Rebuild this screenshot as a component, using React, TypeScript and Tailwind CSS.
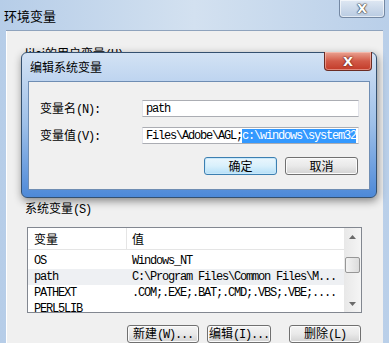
const cjk = "font-['Noto_Sans_CJK_SC',sans-serif]";
const mono = "font-['Liberation_Mono',monospace] text-[12px] tracking-[-1.2px]";

// Win7 style push button
function Btn({
  children,
  w,
  primary,
}: {
  children: React.ReactNode;
  w: string;
  primary?: boolean;
}) {
  return (
    <div
      className={
        w +
        " flex h-[18px] items-center justify-center rounded-[3px] border text-[12px] leading-none text-black " +
        (primary
          ? "border-[#3c7fb1] bg-linear-to-b from-[#eaf6fd] via-[#d9f0fc] to-[#b5dff7] shadow-[inset_0_0_0_1px_#c8e8fa]"
          : "border-[#707070] bg-linear-to-b from-[#f4f4f4] via-[#e9e9e9] to-[#d2d2d2] shadow-[inset_0_0_0_1px_#fbfbfb]")
      }
    >
      {children}
    </div>
  );
}

function Label({ zh, en }: { zh: string; en: string }) {
  return (
    <span className="flex items-baseline whitespace-nowrap text-[12px] text-black">
      <span className={cjk}>{zh}</span>
      <span className={mono}>{en}</span>
    </span>
  );
}

const rows = [
  { name: "OS", value: "Windows_NT" },
  { name: "path", value: "C:\\Program Files\\Common Files\\M...", hl: true },
  { name: "PATHEXT", value: ".COM;.EXE;.BAT;.CMD;.VBS;.VBE;...." },
  { name: "PERL5LIB", value: "" },
];

function Arrow({ up }: { up?: boolean }) {
  return (
    <svg width="7" height="4" viewBox="0 0 7 4">
      <polygon
        points={up ? "0,4 7,4 3.5,0" : "0,0 7,0 3.5,4"}
        fill="#6a6a6a"
      />
    </svg>
  );
}

export default function App() {
  return (
    <div className="relative flex h-[343px] w-[389px] flex-col overflow-hidden bg-linear-to-r from-[#b6cde8] via-[#d3e1f0] to-[#b9cfe9]">
      {/* outer title bar */}
      <div className="flex h-[30px] shrink-0 items-start justify-between pl-[4px] pr-[4px]">
        <span className={cjk + " mt-[6px] text-[13px] text-black"}>环境变量</span>
        <div className="flex h-[18px] w-[46px] items-center justify-center rounded-b-[4px] border border-t-0 border-[#7488a3] bg-linear-to-b from-[#dfe8f3] to-[#b9cbe2] shadow-[inset_0_0_0_1px_rgba(255,255,255,0.6)]">
          <span className="font-['DejaVu_Sans',sans-serif] text-[13px] font-bold leading-none text-white [text-shadow:0_0_1px_#333,0_0_1px_#333,0_0_2px_#444]">
            X
          </span>
        </div>
      </div>

      {/* outer client */}
      <div className="mx-[6px] flex flex-1 flex-col border-t border-[#8fa3bd] bg-[#f0f0f0] shadow-[inset_1px_0_0_#fff]">
        <div className="pl-[19px] pt-[15px] leading-[14px]">
          <Label zh="lilei的用户变量" en="(U)" />
        </div>
        <div className="h-[139px]" />
        <div className="pl-[19px] leading-[14px]">
          <Label zh="系统变量" en="(S)" />
        </div>

        {/* list view */}
        <div className="mx-[21px] mt-[10px] flex h-[86px] border border-[#828790] bg-white">
          <div className="flex flex-1 flex-col overflow-hidden">
            <div className="flex h-[22px] shrink-0 border-b border-[#e5e5e5] text-[12px]">
              <div className={cjk + " flex w-[99px] items-center border-r border-[#e5e5e5] pl-[6px]"}>
                变量
              </div>
              <div className={cjk + " flex items-center pl-[5px]"}>值</div>
            </div>
            <div className="pt-[3px]">
              {rows.map((r) => (
                <div
                  key={r.name}
                  className={
                    "flex h-[16px] items-center text-black " +
                    (r.hl ? "bg-[#eef0f3]" : "")
                  }
                >
                  <div className={mono + " w-[99px] pl-[6px]"}>{r.name}</div>
                  <div className={mono + " whitespace-nowrap pl-[5px]"}>{r.value}</div>
                </div>
              ))}
            </div>
          </div>
          {/* scrollbar */}
          <div className="flex w-[17px] flex-col items-center bg-linear-to-r from-[#e8e8e8] to-[#f5f5f5]">
            <div className="flex h-[17px] items-center justify-center">
              <Arrow up />
            </div>
            <div className="mt-[12px] h-[16px] w-[15px] rounded-[2px] border border-[#979797] bg-linear-to-r from-[#f3f3f3] to-[#dcdcdc]" />
            <div className="flex-1" />
            <div className="flex h-[17px] items-center justify-center">
              <Arrow />
            </div>
          </div>
        </div>

        <div className="mt-[12px] flex pl-[121px]">
          <Btn w="w-[72px]">
            <Label zh="新建" en="(W)..." />
          </Btn>
          <div className="w-[8px]" />
          <Btn w="w-[64px]">
            <Label zh="编辑" en="(I)..." />
          </Btn>
          <div className="w-[18px]" />
          <Btn w="w-[72px]">
            <Label zh="删除" en="(L)" />
          </Btn>
        </div>
      </div>

      {/* edit dialog overlay */}
      <div className="absolute left-[21px] top-[52px] flex h-[146px] w-[356px] flex-col rounded-[6px] border border-[#34506f] bg-linear-to-b from-[#d3e2f4] via-[#9dbfe8] to-[#4d89d8] shadow-[1px_3px_8px_rgba(0,0,0,0.45)]">
        <div className="relative flex h-[28px] shrink-0 items-center pl-[8px]">
          <span className={cjk + " text-[12px] text-black"}>编辑系统变量</span>
          <div className="absolute right-[4px] top-[-1px] flex h-[19px] w-[48px] items-center justify-center rounded-b-[4px] border border-t-0 border-[#6b2c24] bg-linear-to-b from-[#e9a393] via-[#d25a48] to-[#c23a28] shadow-[inset_0_0_0_1px_rgba(255,210,200,0.5)]">
            <span className="font-['DejaVu_Sans',sans-serif] text-[13px] font-bold leading-none text-white [text-shadow:0_0_1px_#5a1a12,0_0_2px_#5a1a12]">
              X
            </span>
          </div>
        </div>
        <div className="mx-[6px] flex h-[109px] flex-col border border-[#6f8db3] bg-[#f0f0f0] pl-[11px] pr-[10px] pt-[18px]">
          <div className="flex h-[17px] items-center">
            <div className="w-[102px]">
              <Label zh="变量名" en="(N):" />
            </div>
            <div className="flex h-[17px] flex-1 items-center border border-[#abadb3] border-l-[#e2e3ea] border-r-[#e2e3ea] bg-white pl-[3px]">
              <span className={mono}>path</span>
            </div>
          </div>
          <div className="mt-[10px] flex h-[17px] items-center">
            <div className="w-[102px]">
              <Label zh="变量值" en="(V):" />
            </div>
            <div className="flex h-[17px] flex-1 items-center overflow-hidden whitespace-nowrap border border-[#abadb3] border-l-[#e2e3ea] border-r-[#e2e3ea] bg-white pl-[3px]">
              <span className={mono}>{"Files\\Adobe\\AGL;"}</span>
              <span className={mono + " bg-[#3399ff] leading-[14px] text-white"}>
                {"c:\\windows\\system32"}
              </span>
            </div>
          </div>
          <div className="mt-[13px] flex justify-end gap-[8px] pr-[1px]">
            <Btn w="w-[73px]" primary>
              <span className={cjk}>确定</span>
            </Btn>
            <Btn w="w-[73px]">
              <span className={cjk}>取消</span>
            </Btn>
          </div>
        </div>
      </div>
    </div>
  );
}
